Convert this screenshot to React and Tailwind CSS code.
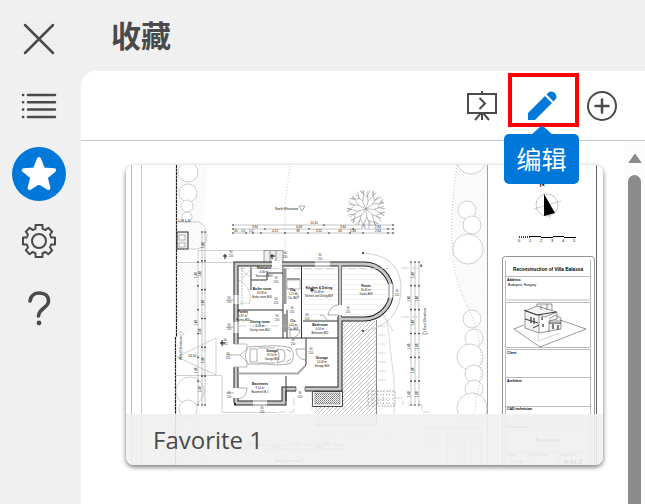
import React from "react";

const ROOMS = [
  [262, 291, "Boiler room", "16.08 m²", "Boiler room B06"],
  [319, 290, "Kitchen & Dining", "16.48 m²", "Kitchen and Dining-B09"],
  [366, 288, "Room", "16.45 m²", "Guest-B08"],
  [293, 292, "Clo.", "1.21 m²", "Clo.-B07"],
  [293, 323, "Clo.", "1.62 m²", "Clo.-B03"],
  [243, 314, "Pantry", "0.87 m²", "Pantry-B04"],
  [260, 324, "Dining room", "8.08 m²", "Dining room-B02"],
  [320, 327, "Bathroom", "4.04 m²", "Bathroom-B11"],
  [272, 353, "Garage", "19.54 m²", "Garage-B05"],
  [322, 360, "Storage", "14.08 m²", "Storage-B06"],
  [260, 386, "Basement", "9.14 m²", "Basement B-1"],
  [264, 270, "Staircase", "4.06 m²", "Staircase-B10"],
];

const TREES = [
  [188, 172, 10], [188, 193, 9], [187, 206, 6], [187, 217, 5],
  [190, 391, 14], [188, 409, 9], [188, 426, 8], [192, 456, 10],
  [471, 159, 15], [467, 210, 9], [472, 225, 9], [468, 249, 15],
  [472, 319, 9], [474, 338, 9], [470, 357, 13], [474, 374, 9],
  [474, 389, 9], [472, 408, 15],
];

const H_DIMS = [
  [225, 233, 393, [[314, "14,10"]]],
  [229, 233, 393, [[255, "3,84"], [299, "4,06"], [343, "3,60"], [378, "2,84"]]],
  [233, 233, 393, [[236, "45"], [243, "1,0"], [251, "1,0"], [275, "4,22"], [298, "38"], [319, "3,22"], [340, "44"], [353, "1,48"], [378, "2,84"]]],
  [445, 228, 342, [[250, "4,82"], [297, "1,46"], [326, "3,64"]]],
  [449, 228, 342, [[276, "5,04"], [318, "4,48"]]],
];

const V_DIMS = [
  [198, 262, 405], [202, 232, 405], [205, 232, 405],
  [411, 262, 405], [415, 262, 405], [419, 262, 405],
];

const SIDE_LABELS = [
  [229, 299], [229, 326], [228, 355], [229, 394], [225, 341],
  [320, 256], [276, 300], [276, 279], [307, 316], [348, 309],
  [311, 350], [277, 317], [300, 394], [262, 409], [397, 292],
  [293, 341], [292, 309], [285, 254], [231, 253],
];

function DimensionLines() {
  return (
    <g stroke="#888" strokeWidth=".5">
      {H_DIMS.map(([y, x1, x2, marks]) => (
        <g key={y}>
          <path d={`M${x1} ${y}H${x2}`} />
          {marks.map(([x, t]) => (
            <g key={x}>
              <circle cx={x + 8 > x2 ? x2 : x + 10} cy={y} r=".8" fill="#222" stroke="none" />
              <text x={x} y={y - 1} fontSize="3" fill="#111" stroke="none" textAnchor="middle">{t}</text>
            </g>
          ))}
          <circle cx={x1} cy={y} r=".8" fill="#222" />
          <circle cx={x2} cy={y} r=".8" fill="#222" />
        </g>
      ))}
      {V_DIMS.map(([x, y1, y2], i) => (
        <g key={x}>
          <path d={`M${x} ${y1}V${y2}`} />
          {[0, 1, 2, 3, 4, 5, 6].map((n) => {
            const y = y1 + ((y2 - y1) * n) / 6;
            return (
              <g key={n}>
                <circle cx={x} cy={y} r=".8" fill="#222" stroke="none" />
                {(n + i) % 2 === 0 && n < 6 && (
                  <text transform={`translate(${x - 1} ${y + 16}) rotate(-90)`} fontSize="3" fill="#111" stroke="none">1,48</text>
                )}
              </g>
            );
          })}
        </g>
      ))}
    </g>
  );
}

function Shrub() {
  return (
    <g stroke="#999" strokeWidth=".6" fill="none">
      {[0, 40, 78, 118, 160, 202, 240, 282, 322].map((a) => (
        <path key={a} transform={`translate(366 209) rotate(${a})`} d="M0 0L2-8L1-18M2-8L7-13L7-18M7-13L10-16M1-12L-3-15L-3-19M1-12L4-19M-3-15L-6-18" />
      ))}
    </g>
  );
}

function TitleBlock() {
  return (
    <g fill="none" stroke="#aaa" strokeWidth=".8">
      <rect x="502.500" y="256.500" width="92" height="220" rx="3" stroke="#777" />
      <path d="M505.500 260V300M590.500 260V300M505 276.500H591M505 300H591" />
      <rect x="505.500" y="302.500" width="85" height="45" />
      <path d="M505.500 465V349.500H590.500V465M505 377.500H591M505 406.500H591M505 424H591M505 452H591M528 452V465M558 452V465" />
      <g stroke="#555" strokeWidth=".6">
        <path d="M514 329L524 325M560 320L586 329L540 347L514 329" />
        <path d="M525 311L537 306L557 312L545 317ZM525 311V328L539 333V315M539 333L561 329V320M557 312V319L549 321V332M537 306V304L552 304V310M541 310V305M547 310V304M549 319L555 315L561 318V321L549 321" fill="#f4f4f4" />
        <path d="M524 310L537 315L556 312M525 319L538 323M549 323H561M533 328L539 325" stroke="#222" strokeWidth=".9" />
        <path d="M538 334V341L560 333" stroke="#bbb" />
        <path d="M531 317V323M534 318V324M542 317V320M543 324V327M553 324V329M558 325V330" strokeWidth="1.500" />
      </g>
      <g fill="#000" stroke="none" fontWeight="700">
        <text x="548" y="271" fontSize="4.700" textAnchor="middle">Reconstruction of Villa Balassa</text>
        <text x="507" y="281" fontSize="3.400">Address</text>
        <text x="508" y="286" fontSize="3.300" fontWeight="400">Budapest, Hungary</text>
        <text x="507" y="354" fontSize="3.400">Client</text>
        <text x="507" y="382" fontSize="3.400">Architect</text>
        <text x="507" y="410" fontSize="3.400">CAD technician</text>
        <g fontWeight="400">
          <text x="507" y="428" fontSize="3.400">Drawing name</text>
          <text x="548" y="442" fontSize="5.500" textAnchor="middle">Basement</text>
          <text x="507" y="456" fontSize="3.400">Scale</text>
          <text x="529" y="456" fontSize="3.400">Date of issue</text>
          <text x="560" y="456" fontSize="3.400">Drawing ID</text>
          <text x="511" y="463" fontSize="3.400">M 1:100</text>
        </g>
        <text x="564" y="464" fontSize="6">A-01.2</text>
      </g>
    </g>
  );
}

function FloorPlan() {
  return (
    <svg viewBox="126 165 477 300" className="block w-full font-['Liberation_Sans',Arial,sans-serif]" role="img" aria-label="Favorite 1">
      <defs>
        <pattern id="hatch" width="4" height="4" patternUnits="userSpaceOnUse">
          <path d="M0 4L4 0" stroke="#999" strokeWidth=".6" />
        </pattern>
        <pattern id="lawn" width="3" height="3" patternUnits="userSpaceOnUse">
          <path d="M0 0L3 3" stroke="#e6e6e6" strokeWidth=".6" />
        </pattern>
        <pattern id="dots" width="2" height="2" patternUnits="userSpaceOnUse">
          <rect width="1" height="1" fill="#777" /><rect x="1" y="1" width="1" height="1" fill="#999" />
        </pattern>
        <pattern id="boards" width="4" height="5" patternUnits="userSpaceOnUse">
          <path d="M0 4.500H4" stroke="#ececec" strokeWidth=".7" />
        </pattern>
      </defs>
      <rect x="126" y="165" width="477" height="300" fill="#fff" />
      <path d="M178 165H208L201 250H178ZM178 262H197V320Q190 335 178 337Z" fill="url(#lawn)" />
      <path d="M457 165H487V385Q483 330 463 298Q446 250 457 165" fill="url(#lawn)" />
      <g stroke="#999" fill="none" strokeWidth=".8">
        <path d="M131.500 165V465" stroke="#aaa" />
        <path d="M141.500 165V465" stroke="#bbb" />
        <path d="M487.500 165V465" stroke="#888" />
        <path d="M596.500 165V465" stroke="#666" strokeWidth="1" />
      </g>
      <path d="M176.500 165V337M175.500 337V465" stroke="#222" strokeWidth="1.200" strokeDasharray="3 .5" />
      <g fill="#fff" stroke="#bbb" strokeWidth=".7">
        {TREES.map(([x, y, r]) => <circle key={`${x}-${y}`} cx={x} cy={y} r={r} />)}
      </g>
      <path d="M457 165C446 240 453 280 467 305C484 340 484 370 476 399L470 465M290 166L285 205V266" fill="none" stroke="#aaa" strokeWidth=".7" strokeDasharray="1 2" />
      <rect x="177" y="232" width="11" height="17" fill="#eee" stroke="#333" />
      <path d="M179 235H185V240H179ZM179 243H185V247H179Z" fill="#fff" stroke="#888" strokeWidth=".6" />
      <path d="M177 222H199Q207 226 207 236Q206 247 197 249H189M177 262.500H234M198 250.500H268M198 250V262M176 375.500H222V412.500H277M177 357L216 338V375L177 357M180 331L184 334L180 337Z" fill="none" stroke="#bbb" strokeWidth=".7" />
      <g fontSize="3.400" fill="#111">
        <text x="275" y="210">North Elevation</text>
        <text x="178" y="222" fontSize="3">1,06 1,20</text>
        <text transform="translate(182 360) rotate(-90)">West Elevation</text>
        <text transform="translate(426 330) rotate(-90)">East Elevation</text>
        <text x="275" y="462">South Elevation</text>
        <text x="420" y="267">A</text><text x="188" y="357">14,10</text>
      </g>
      <path d="M299 206H305L302 211ZM422 334H428L425 331ZM299 462H305L302 457Z" fill="none" stroke="#888" strokeWidth=".7" />
      <Shrub />
      <DimensionLines />

      <path d="M342 321H376V425H315V406H342Z" fill="url(#hatch)" />
      <path d="M376.500 320V425H315" fill="none" stroke="#888" />
      <path d="M378 326H386M378 335H386M378 344H386M378 353H386M378 362H386M378 371H386M378 380H386M378 400H386M387 320L394 380V430Q394 437 386 437H322V426M335 426V435M347 426V435M360 426V435" fill="none" stroke="#ccc" strokeWidth=".7" />
      <rect x="368" y="391" width="27" height="15" fill="none" stroke="#999" strokeWidth=".7" strokeDasharray="2 1" />
      <path d="M368 395H395M368 399H395M368 403H395M373 391V406M378 391V406M383 391V406M388 391V406" stroke="#888" strokeWidth=".7" strokeDasharray="1 2" />
      <path d="M363 253Q399 255 401 286Q402 325 363 331M380 309L393 331" fill="none" stroke="#bbb" strokeWidth=".7" />
      <circle cx="363" cy="253" r="1" fill="#222" /><circle cx="363" cy="331" r="1" fill="#222" />
      <path d="M264 262V250.500H283V262M270 251V262M276 251V262" fill="#eee" stroke="#777" strokeWidth=".7" />
      <path d="M342 266H365A25 25 0 0 1 365 318H342Z" fill="url(#boards)" />
      <path d="M303 266H338V320H303Z" fill="url(#boards)" />

      <g fill="none" stroke="#222" strokeWidth="5" strokeLinejoin="miter">
        <path d="M236 403V264H364A27 27 0 0 1 364 319H340V389H284V403H234" />
        <path d="M340 264V320" strokeWidth="4" />
      </g>
      <g fill="none" stroke="#c8c8c8" strokeWidth="3">
        <path d="M236 403V264H364A27 27 0 0 1 364 319H340V389H284V403H236M340 265V320" />
      </g>
      <g stroke="#333" strokeWidth="1" fill="none">
        <path d="M301.500 266V338M303 321H338M238 310H283M238 338H338M283 267V338M287 310V338M251 290V280H267V273H283M287 279H300M238 373.500H298L306 365V338M286 376V401M251 267V280" />
        <path d="M285 268V304M285 314V332" stroke="#999" strokeWidth="3" />
        <path d="M238 373.500H298L305 366" stroke="#aaa" strokeWidth="2" />
      </g>
      <g stroke="#fff" strokeWidth="6" fill="none">
        <path d="M236 295V304M236 322V333M236 344V367M236 388V398M253 403H267M296 389H305M315 264H330M272 264H282M340 305V315M391 284V298" />
      </g>
      <g stroke="#666" strokeWidth=".8" fill="none">
        <path d="M234 295V304M238 295V304M234 322V333M238 322V333M253 401H267M253 405H267M296 387V391M305 387V391M315 262H330M315 266H330M389 284V298M393 284V298" />
        <path d="M338 305A11 11 0 0 0 328 315H338M238 388H247A10 10 0 0 1 238 399M306 360A10 10 0 0 1 296 349H306M290 338V330H300A9 9 0 0 1 290 338M287 288Q297 289 299 298M320 315A7 7 0 0 1 327 321M226 300H234M226 327H234M226 355H234M226 393H234" stroke="#999" />
        <path d="M241 269L251 278V288M251 269L243 278M239 280Q252 287 250 303H240M242 267V305" stroke="#aaa" strokeDasharray="2 1" />
        <rect x="287" y="280" width="13" height="9" stroke="#aaa" />
        <path d="M234 344H247V367H234M234 355H240L247 349M240 355L247 362" stroke="#aaa" />
      </g>
      <g fill="#fff" stroke="#999" strokeWidth=".8">
        <path d="M248 347L267 346Q282 345 291 348Q296 355 291 363Q282 366 266 364L248 364Q243 356 248 347Z" />
        <path d="M250 349H257V362H250ZM277 349Q281 356 277 363L284 361Q286 355 284 350ZM258 348H275M258 363H275M286 349L291 352M286 362L291 359" />
      </g>
      <rect x="312.500" y="391.500" width="30" height="15" fill="#fff" stroke="#444" />
      <rect x="315" y="393" width="25" height="11" fill="url(#dots)" stroke="#777" strokeWidth=".6" />
      <path d="M294 398V412H277M312 391V412M238 268.500H390M238 326H300M401 268H418M401 317H418M395 398H403V405M408 405H422V412H430" stroke="#bbb" strokeWidth=".6" strokeDasharray="8 3" fill="none" />
      {ROOMS.map(([x, y, name, area, code]) => (
        <g key={code} textAnchor="middle" fill="#111" fontSize="2.700">
          <text x={x} y={y - 1} fontSize="3.300" fontWeight="700">{name}</text>
          <text x={x} y={y + 3}>{area}</text>
          <text x={x} y={y + 7}>{code}</text>
        </g>
      ))}
      {SIDE_LABELS.map(([x, y]) => (
        <g key={`${x}-${y}`} textAnchor="middle" fill="#333" fontSize="2.800">
          <text x={x} y={y}>90</text><text x={x} y={y + 4}>210</text>
        </g>
      ))}
      <path d="M222 340V346M220 343H225M312 288V292M310 290H314M225 254V259M223 256H227M272 254V259M270 256H275" stroke="#111" />

      <circle cx="547" cy="205" r="11" fill="none" stroke="#aaa" strokeWidth=".7" />
      <path d="M534 209L561 201M544 193L550 218" stroke="#bbb" strokeWidth=".7" />
      <path d="M544 194L555 213L544 216Z" fill="#000" />
      <text transform="translate(540 187) rotate(-15)" fontSize="7" fontWeight="700">N</text>
      <path d="M519 237H530" stroke="#000" strokeWidth="1.500" strokeDasharray="1 1" />
      <path d="M530 236.500H541M541 237.500H553M553 236.500H564M564 237.500H576" stroke="#000" strokeWidth="1.200" />
      {[0, 1, 2, 3, 4, 5].map((n) => <text key={n} x={518 + n * 11} y="242" fontSize="4">{n}</text>)}
      <TitleBlock />
      <path d="M423 427.500H481V465M447 428V465M464 428V465M423 440H481" fill="none" stroke="#aaa" strokeWidth=".7" />
    </svg>
  );
}

function NavButton({ label, active, children }) {
  return (
    <button aria-label={label} className={`flex h-[54px] w-[54px] items-center justify-center rounded-full ${active ? "bg-[#0078d9] text-white" : "text-[#4a4a4a]"}`}>
      {children}
    </button>
  );
}

export default function App() {
  return (
    <div className="flex h-screen overflow-hidden bg-[#f0f0f0] font-['Open_Sans','Noto_Sans_CJK_SC',sans-serif] text-[#4a4a4a]">
      <nav className="w-[81px] shrink-0 px-3 pt-3">
        <div className="flex h-[323px] flex-col justify-between">
          <NavButton label="关闭">
            <svg width="32" height="32" viewBox="0 0 32 32" fill="none" stroke="currentColor" strokeWidth="2.500" strokeLinecap="round"><path d="M2 2L30 30M30 2L2 30" /></svg>
          </NavButton>
          <NavButton label="列表">
            <svg width="36" height="26" viewBox="0 0 36 26" fill="none" stroke="currentColor" strokeWidth="2.500" strokeLinecap="round"><path d="M7 2H34M7 9.300H34M7 16.600H34M7 24H34M2 2H2.200M2 9.300H2.200M2 16.600H2.200M2 24H2.200" /></svg>
          </NavButton>
          <NavButton label="收藏" active>
            <svg width="36" height="36" viewBox="0 0 36 36" fill="currentColor" stroke="currentColor" strokeWidth="4" strokeLinejoin="round"><path d="M18 3L22.200 13.500L33.200 14.200L24.700 21.200L27.400 32L18 26L8.600 32L11.300 21.200L2.800 14.200L13.800 13.500Z" /></svg>
          </NavButton>
          <NavButton label="设置">
            <svg width="36" height="36" viewBox="0 0 36 36" fill="none" stroke="currentColor" strokeWidth="2" strokeLinejoin="round">
              <path d="M14.500 5.800V2H21.500V5.800L24.500 7L27.300 4.800L31.200 8.700L29 11.500L30.200 14.500H34V21.500H30.200L29 24.500L31.200 27.300L27.300 31.200L24.500 29L21.500 30.200V34H14.500V30.200L11.500 29L8.700 31.200L4.800 27.300L7 24.500L5.800 21.500H2V14.500H5.800L7 11.500L4.800 8.700L8.700 4.800L11.500 7Z" />
              <circle cx="18" cy="18" r="7" />
            </svg>
          </NavButton>
          <NavButton label="帮助">
            <svg width="24" height="36" viewBox="0 0 24 36" fill="none" stroke="currentColor" strokeWidth="3.600" strokeLinecap="round"><path d="M3 11C4 5 7 3 12.500 3C18 3 21.500 6 21.500 11C21.500 18 12 18 11.500 26" /><circle cx="12" cy="33" r="2.400" fill="currentColor" stroke="none" /></svg>
          </NavButton>
        </div>
      </nav>
      <div className="flex min-w-0 flex-1 flex-col">
        <header className="flex h-[71px] shrink-0 items-center px-[30px]">
          <h1 className="text-[30px] leading-[70px] font-bold">收藏</h1>
        </header>
        <main className="flex min-h-0 flex-1 flex-col rounded-tl-[15px] bg-white">
          <div className="flex h-[70px] shrink-0 items-start justify-end border-b border-[#c6c6c6] pr-7">
            <button aria-label="演示" className="mr-[11px] flex h-[70px] items-center">
              <svg width="30" height="30" viewBox="0 0 30 30" fill="none" stroke="currentColor" strokeWidth="2"><path d="M1 3H29V22H1ZM15 0V3M15 22V29M14 22L8 29M16 22L22 29" /><path d="M12.500 7L18 12.500L12.500 18" /></svg>
            </button>
            <div className="relative mt-[2px]">
              <button aria-label="编辑" aria-describedby="edit-tip" className="flex h-[54px] w-[71px] items-center justify-center border-4 border-[#ff0000] pt-[11px] pr-1 text-[#0078d9]">
                <svg width="30" height="30" viewBox="0 0 30 30" fill="currentColor"><path d="M1 22L18 5L25 12L8 29H1Z" /><path d="M19.500 3.500L21 2C24 -1 27 1 28.500 3C30 5 29.500 7.500 28 9L26.500 10.500Z" /></svg>
              </button>
              <div id="edit-tip" role="tooltip" className="absolute top-[61px] right-0 z-10 flex h-[50px] w-[75px] items-center justify-center rounded-[5px] bg-[#0078d9] pt-[2px] text-[25px] text-white">
                <svg className="absolute -top-2 left-[27px]" width="22" height="9" viewBox="0 0 22 9" fill="#0078d9"><path d="M0 9L9 1Q11 -1 13 1L22 9Z" /></svg>
                编辑
              </div>
            </div>
            <button aria-label="添加" className="ml-2 flex h-[70px] items-center">
              <svg width="30" height="30" viewBox="0 0 30 30" fill="none" stroke="currentColor" strokeWidth="2"><circle cx="15" cy="15" r="14" /><path d="M15 8.500V21.500M8.500 15H21.500" strokeWidth="2.500" strokeLinecap="round" /></svg>
            </button>
          </div>
          <div className="flex min-h-0 flex-1">
            <div className="min-w-0 flex-1 overflow-hidden pt-6 pr-[21px] pl-[45px]">
              <button className="relative block w-full overflow-hidden rounded-[8px] text-left shadow-[0_2px_5px_rgba(0,0,0,0.55)]">
                <FloorPlan />
                <span className="absolute inset-x-0 bottom-0 flex h-[51px] items-center bg-[#f0f0f0]/90 px-[27px] text-2xl">Favorite 1</span>
              </button>
            </div>
            <div className="flex w-[21px] shrink-0 flex-col items-center bg-[#fcfcfc] pt-3">
              <svg width="14" height="10" viewBox="0 0 14 10" fill="#8b8b8b" stroke="#8b8b8b" strokeLinejoin="round"><path d="M7 1L13 9.500H1Z" /></svg>
              <div className="mt-3 w-[13px] flex-1 rounded-t-full bg-[#8b8b8b]" />
            </div>
          </div>
        </main>
      </div>
    </div>
  );
}
